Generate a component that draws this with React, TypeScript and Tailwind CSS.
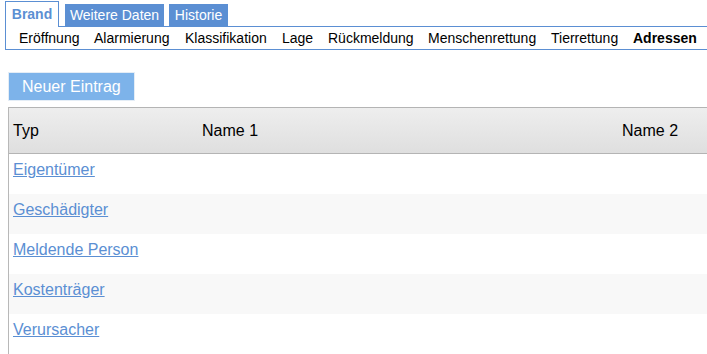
const navItems = [
  { label: "Eröffnung", w: "w-[75px]" },
  { label: "Alarmierung", w: "w-[91px]" },
  { label: "Klassifikation", w: "w-[97px]" },
  { label: "Lage", w: "w-[46px]" },
  { label: "Rückmeldung", w: "w-[100px]" },
  { label: "Menschenrettung", w: "w-[123px]" },
  { label: "Tierrettung", w: "w-[82px]" },
];

const rows = ["Eigentümer", "Geschädigter", "Meldende Person", "Kostenträger", "Verursacher"];

export default function App() {
  return (
    <div className="w-[707px] h-[354px] overflow-hidden bg-white font-['Liberation_Sans',Arial,sans-serif] text-black">
      {/* tabs */}
      <div className="flex items-end gap-[5px] pl-[5px] pt-[1px] relative z-10">
        <div className="w-[54px] h-[26px] -mb-px border border-b-0 border-[#5b8fd3] bg-white text-[14px] font-bold text-[#5b8fd3] leading-[20px] pt-[2px] text-center">
          Brand
        </div>
        <div className="w-[99px] h-[22px] ml-[1px] bg-[#5b8fd3] text-white text-[14px] leading-[22px] text-center">
          Weitere Daten
        </div>
        <div className="w-[59px] h-[22px] bg-[#5b8fd3] text-white text-[14px] leading-[22px] text-center">
          Historie
        </div>
      </div>

      {/* sub navigation */}
      <div className="ml-[5px] w-[760px] h-[24px] border border-r-0 border-[#5b8fd3] flex items-center pl-[13px] text-[14px]">
        {navItems.map((n) => (
          <span key={n.label} className={`${n.w} shrink-0 whitespace-nowrap`}>
            {n.label}
          </span>
        ))}
        <span className="font-bold whitespace-nowrap">Adressen</span>
      </div>

      <button className="mt-[22px] ml-[8px] h-[29px] px-[13px] bg-[#7db3ea] border border-[#e4edf6] text-white text-[16px] leading-[27px]">
        Neuer Eintrag
      </button>

      {/* table */}
      <div className="mt-[6px] ml-[8px] w-[760px] border-l border-[#b8b8b8]">
        <div className="grid grid-cols-[189px_420px_1fr] h-[47px] items-center border-y border-[#b4b4b4] bg-linear-to-b from-[#eeeeee] to-[#dfdfdf] text-[16px]">
          <div className="pl-[4px]">Typ</div>
          <div className="pl-[4px]">Name 1</div>
          <div className="pl-[4px]">Name 2</div>
        </div>
        {rows.map((r, i) => (
          <div
            key={r}
            className={`grid grid-cols-[189px_420px_1fr] h-[40px] pt-[7px] text-[16px] leading-[18px] ${
              i % 2 === 1 ? "bg-[#f8f8f8]" : "bg-white"
            }`}
          >
            <div className="pl-[4px]">
              <a href="#" className="text-[#5b8fd3] underline">
                {r}
              </a>
            </div>
            <div />
            <div />
          </div>
        ))}
      </div>
    </div>
  );
}
